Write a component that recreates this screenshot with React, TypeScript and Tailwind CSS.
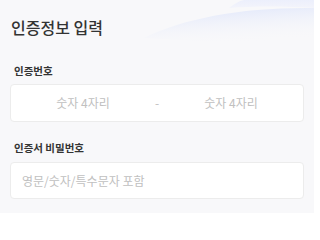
export default function App() {
  return (
    <div
      className="relative h-[213px] w-[314px] overflow-hidden bg-[#f8f8fa] text-[#333]"
      style={{ fontFamily: '"Noto Sans CJK KR", "Noto Sans", sans-serif' }}
    >
      <svg
        className="pointer-events-none absolute right-0 top-0"
        width="170"
        height="50"
        viewBox="0 0 170 50"
      >
        <defs>
          <linearGradient id="wave" x1="0" y1="0" x2="0.3" y2="1">
            <stop offset="0" stopColor="#dbe3fb" />
            <stop offset="1" stopColor="#f8f8fa" stopOpacity="0" />
          </linearGradient>
          <linearGradient id="wave2" x1="0" y1="0" x2="0" y2="1">
            <stop offset="0" stopColor="#eceffc" />
            <stop offset="1" stopColor="#f3f4fb" />
          </linearGradient>
        </defs>
        <path d="M0 38 C40 18 100 7 170 8 L170 46 C110 42 60 42 0 38 Z" fill="url(#wave)" />
        <path d="M85 8 C90 4 95 1 100 0 L170 0 L170 8 C140 6 110 6 85 8 Z" fill="url(#wave2)" />
      </svg>

      <div className="relative flex flex-col px-[10px]">
        <h1 className="pl-[1px] pt-[17px] text-[16px] font-medium leading-[20px] text-[#333]">
          인증정보 입력
        </h1>

        <label className="mt-[27px] pl-[4px] text-[10.5px] font-semibold leading-[14px] text-[#333]">
          인증번호
        </label>
        <div className="mt-[6px] flex h-[38px] items-center rounded-[4px] border border-[#ececec] bg-white">
          <span className="flex-1 text-center text-[12px] text-[#c0c0c0]">숫자 4자리</span>
          <span className="text-[12px] text-[#c0c0c0]">-</span>
          <span className="flex-1 text-center text-[12px] text-[#c0c0c0]">숫자 4자리</span>
        </div>

        <label className="mt-[19px] pl-[4px] text-[10.5px] font-semibold leading-[14px] text-[#333]">
          인증서 비밀번호
        </label>
        <div className="mt-[7px] flex h-[37px] items-center rounded-[4px] border border-[#ececec] bg-white px-[11px]">
          <span className="text-[12px] text-[#c0c0c0]">영문/숫자/특수문자 포함</span>
        </div>
      </div>
    </div>
  );
}
